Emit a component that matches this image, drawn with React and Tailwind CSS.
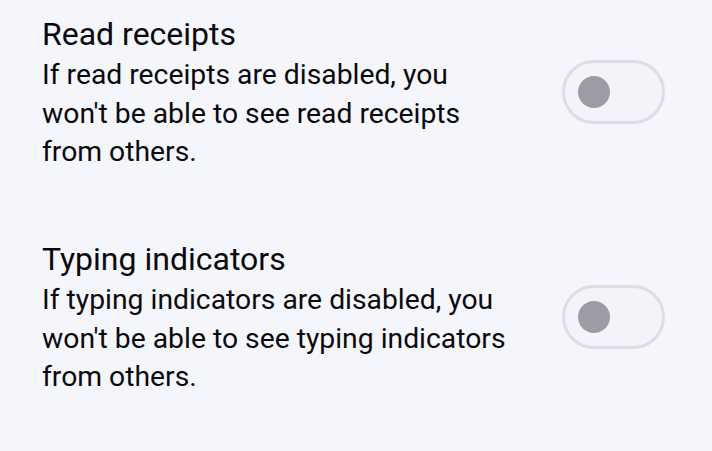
import { useState } from "react";

const settings = [
  {
    id: "read-receipts",
    title: "Read receipts",
    description: "If read receipts are disabled, you won't be able to see read receipts from others.",
  },
  {
    id: "typing-indicators",
    title: "Typing indicators",
    description: "If typing indicators are disabled, you won't be able to see typing indicators from others.",
  },
];

const Toggle = ({ checked, onChange }) => (
  <button
    type="button"
    role="switch"
    aria-checked={checked}
    onClick={() => onChange(!checked)}
    className={`mt-[46px] flex items-center w-[103px] h-[64px] shrink-0 rounded-full border-[3px] px-[13px] ${
      checked ? "bg-[#5b5fc7] border-[#5b5fc7] justify-end" : "bg-[#f4f3f9] border-[#dedce4] justify-start"
    }`}
  >
    <span className={`block w-[32px] h-[32px] rounded-full ${checked ? "bg-white" : "bg-[#9d9ca5]"}`} />
  </button>
);

const App = () => {
  const [values, setValues] = useState({ "read-receipts": false, "typing-indicators": false });

  return (
    <div className="w-[712px] h-[451px] bg-[#f5f5fc] text-[#0a0a0d] pl-[42px] pr-[47px] font-['Roboto',sans-serif]">
      {settings.map((s) => (
        <div key={s.id} className="flex items-start justify-between h-[225px] pt-[14px]">
          <div className="w-[472px]">
            <h2 className="text-[32px] leading-[40px] font-normal">{s.title}</h2>
            <p className="mt-[2px] text-[28.3px] leading-[38.5px]">{s.description}</p>
          </div>
          <Toggle
            checked={values[s.id]}
            onChange={(v) => setValues((prev) => ({ ...prev, [s.id]: v }))}
          />
        </div>
      ))}
    </div>
  );
};

export default App;
